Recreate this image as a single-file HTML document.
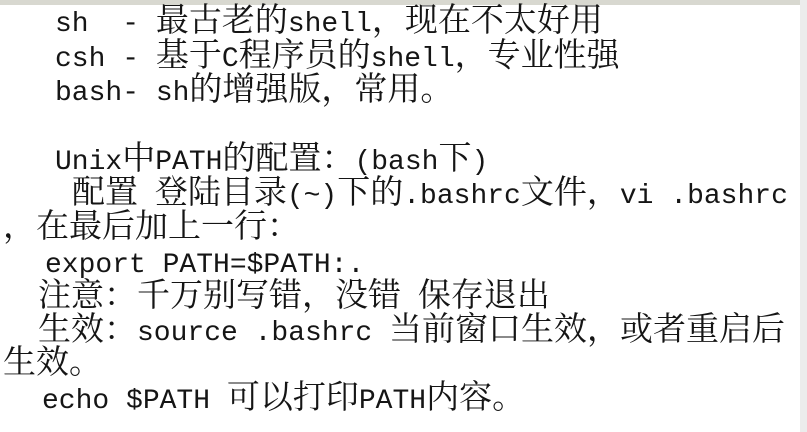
<!DOCTYPE html>
<html><head><meta charset="utf-8"><style>
body{margin:0;width:807px;height:432px;background:#fff;overflow:hidden;position:relative;font-family:"Noto Serif CJK SC","Noto Sans CJK SC",serif;font-size:33px;color:#151515}
.l{position:absolute;white-space:pre;line-height:34px;height:34px}
.m{font-family:"Liberation Mono",monospace;font-size:28px;letter-spacing:0}
.top{position:absolute;left:0;top:0;width:807px;height:5px;background:#d8d8d0}
.rs{position:absolute;right:0;top:0;width:7px;height:432px;background:#ececec}
</style></head><body>
<div class="top"></div><div class="rs"></div>
<div class="l" style="left:55px;top:1px"><span class="m">sh  - </span>最古老的<span class="m">shell</span>，现在不太好用</div>
<div class="l" style="left:55px;top:36px"><span class="m">csh - </span>基于<span class="m">C</span>程序员的<span class="m">shell</span>，专业性强</div>
<div class="l" style="left:55px;top:70px"><span class="m">bash- sh</span>的增强版，常用。</div>
<div class="l" style="left:55px;top:139px"><span class="m">Unix</span>中<span class="m">PATH</span>的配置：<span class="m">(bash</span>下<span class="m">)</span></div>
<div class="l" style="left:72px;top:173px">配置<span class="m"> </span>登陆目录<span class="m">(~)</span>下的<span class="m">.bashrc</span>文件，<span class="m">vi .bashrc</span></div>
<div class="l" style="left:3px;top:207px">，在最后加上一行：</div>
<div class="l" style="left:45px;top:242px"><span class="m">export PATH=$PATH:.</span></div>
<div class="l" style="left:38px;top:276px">注意：千万别写错，没错<span class="m"> </span>保存退出</div>
<div class="l" style="left:38px;top:310px">生效：<span class="m">source .bashrc </span>当前窗口生效，或者重启后</div>
<div class="l" style="left:3px;top:343px">生效。</div>
<div class="l" style="left:42px;top:378px"><span class="m">echo $PATH </span>可以打印<span class="m">PATH</span>内容。</div>
</body></html>
